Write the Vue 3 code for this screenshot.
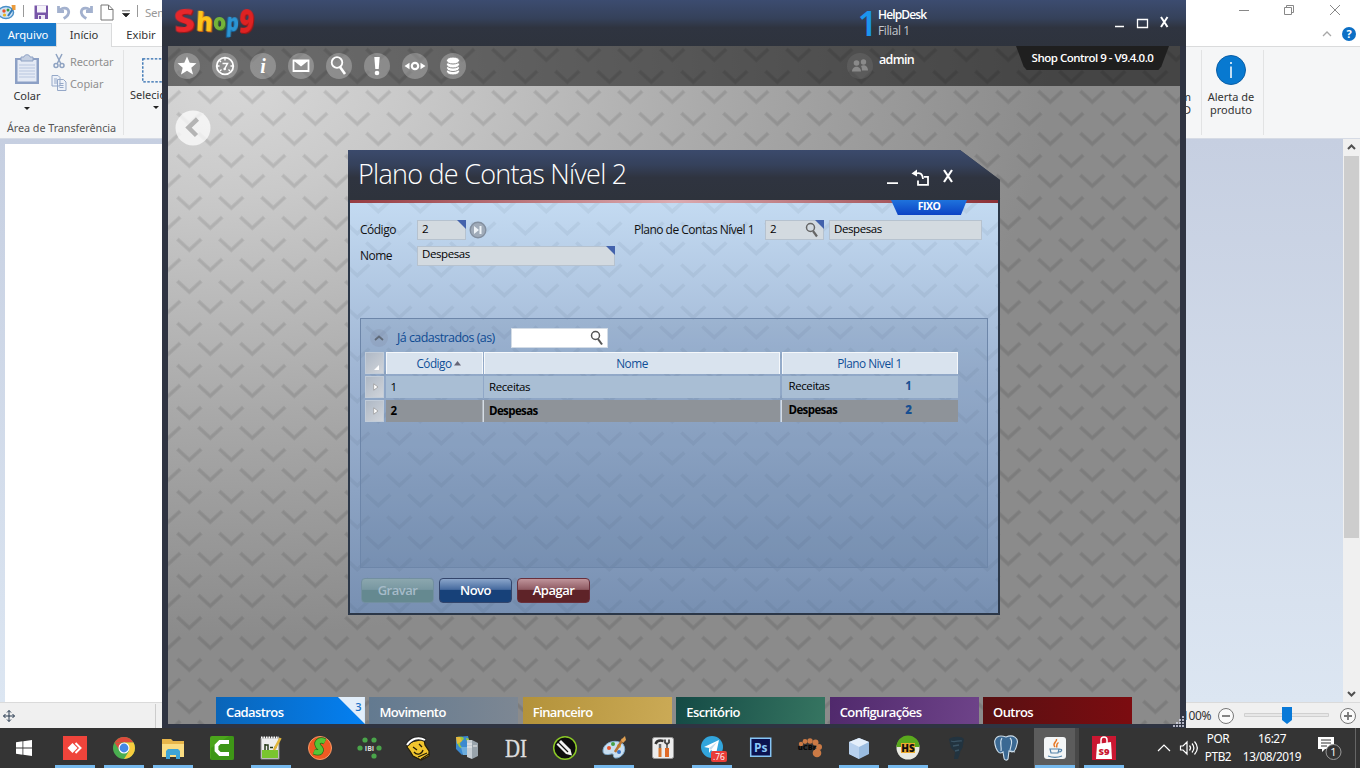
<script setup>
const tools = ['star', 'gauge', 'info', 'mail', 'search', 'alert', 'eye', 'data']
const modules = [
  { name: 'Cadastros', cls: 'blue', badge: 3 },
  { name: 'Movimento', cls: 'slate' },
  { name: 'Financeiro', cls: 'gold' },
  { name: 'Escritório', cls: 'green' },
  { name: 'Configurações', cls: 'purple' },
  { name: 'Outros', cls: 'red' },
]
const rows = [
  { code: 1, name: 'Receitas', parent: 'Receitas', parentCode: 1 },
  { code: 2, name: 'Despesas', parent: 'Despesas', parentCode: 2, selected: true },
]
const tasks = [
  { id: 'anydesk', open: true }, { id: 'chrome', open: true }, { id: 'folder', open: true },
  { id: 'camtasia' }, { id: 'notepad', open: true }, { id: 'sicon' }, { id: 'ib' }, { id: 'smile' },
  { id: 'globe' }, { id: 'di' }, { id: 'pen' }, { id: 'paint', open: true }, { id: 'toolsapp' },
  { id: 'telegram', open: true }, { id: 'ps' }, { id: 'ucbr' }, { id: 'cube', open: true },
  { id: 'hs', open: true }, { id: 'bust' }, { id: 'postgres' }, { id: 'java', open: true, active: true },
  { id: 's9', open: true },
]
</script>

<template>
  <div class="screen">
    <section class="paint">
      <div class="p-title">
        <div class="quick">
          <svg width="16" height="16" viewBox="0 0 16 16" class="q1"><ellipse cx="6" cy="8.500" rx="7.500" ry="6" fill="#cfe3f5" stroke="#4a90c8" stroke-width="1.500"/><circle cx="4" cy="7" r="1.700" fill="#e8542c"/><circle cx="8" cy="6" r="1.500" fill="#3a9c3c"/><circle cx="4.500" cy="11" r="1.600" fill="#e6b422"/><path d="M8 12 13.500 4" stroke="#3079b8" stroke-width="2"/><path d="M11.500 1h4v5h-3z" fill="#eb9b3c"/></svg>
          <i class="bar b1"></i>
          <svg width="15" height="15" viewBox="0 0 15 15" class="q2"><path d="M.5.500h13.500V14H.5z" fill="#7856a8"/><path d="M3 .5h9v7H3z" fill="#f5f3fa"/><path d="M4 10h7v4H4z" fill="#ece8f4"/><path d="M5 11h2v3H5z" fill="#7856a8"/></svg>
          <svg width="14" height="15" viewBox="0 0 14 15" class="q3"><path d="M1.500 1v5.500H7M2 6c3-4 9-4 9.700.5.5 3-2 5.200-5 7" fill="none" stroke="#a3b1ce" stroke-width="2.800"/></svg>
          <svg width="14" height="15" viewBox="0 0 14 15" class="q4"><path d="M12.500 1v5.500H7M12 6C9 2 3 2 2.300 6.500c-.5 3 2 5.200 5 7" fill="none" stroke="#a3b1ce" stroke-width="2.800"/></svg>
          <svg width="14" height="17" viewBox="0 0 14 17" class="q5"><path d="M1 1h7.500L13 5.500V16H1z" fill="#fff" stroke="#777"/><path d="M8.500 1v4.500H13" fill="none" stroke="#777"/></svg>
          <svg width="8" height="8" viewBox="0 0 8 8" class="q6"><path d="M0 .8h8M.5 3.500h7L4 7z" fill="#222" stroke="#222" stroke-width=".7"/></svg>
          <i class="bar b2"></i><span class="doc">Sem</span>
        </div>
        <svg width="105" height="20" viewBox="0 0 105 20" class="wbtn" fill="none" stroke="#888"><path d="M4 10.500h10M49.500 7.500h7v7h-7zM51.500 7.500v-2h7v7h-2"/><path d="m95 5 10 10M105 5 95 15"/></svg>
      </div>
      <div class="p-tabs">
        <span class="t-file">Arquivo</span><span class="t-home">Início</span><span class="t-view">Exibir</span>
        <svg width="38" height="18" viewBox="0 0 38 18" class="help"><path d="m5 11 4-4 4 4" fill="none" stroke="#a8a8a8" stroke-width="1.300"/><circle cx="31" cy="9" r="7" fill="#0c6fc5"/><text x="31" y="13" text-anchor="middle" class="qm">?</text></svg>
      </div>
      <div class="ribbon">
        <div class="clip">
          <div class="clip-row">
            <div class="paste">
              <svg width="26" height="31" viewBox="0 0 26 31"><path d="M1 4h24v26H1z" fill="#8ca0c5"/><path d="M3.500 6h19v21.500h-19z" fill="#e4eaf5"/><path d="M7 3h3c0-3 6-3 6 0h3v4H7z" fill="#c4cfe2" stroke="#8fa2c4"/><path d="M5 11h16M5 14h16M5 17h16M5 20h16M5 23h16" stroke="#b8c6df"/></svg>
              <span>Colar</span><i class="arrow"></i>
            </div>
            <div class="cutcopy">
              <div><svg width="16" height="16" viewBox="0 0 16 16" fill="none" stroke="#8fa3c2" stroke-width="1.500"><path d="m5 1 5 10M11 1 6 11"/><circle cx="5" cy="12.500" r="2"/><circle cx="11" cy="12.500" r="2"/></svg>Recortar</div>
              <div><svg width="16" height="16" viewBox="0 0 16 16" fill="#eef2f9" stroke="#95a8c8"><path d="M1 .5h6l2 2V11H1zM6.500 4.500h6l2.500 2.500v8.500H6.500z"/><path d="M3 4h3M3 6h3M3 8h3M8.500 8.500h4M8.500 10.500h4M8.500 12.500h4"/></svg>Copiar</div>
            </div>
          </div>
          <span class="grp">Área de Transferência</span>
        </div>
        <div class="selectg"><svg width="40" height="25" viewBox="0 0 40 25"><path d="M.8.800h38v23H.8z" fill="none" stroke="#2868ad" stroke-width="1.300" stroke-dasharray="2.500 1.500"/></svg><span>Selecio</span><i class="arrow"></i></div>
        <div class="cut3d"><span>m</span><span>D</span></div>
        <div class="alertg">
          <svg width="30" height="30" viewBox="0 0 30 30"><circle cx="15" cy="15" r="14.500" fill="#0879d0" stroke="#0a5ea6"/><path d="M15 11.500V23M15 7v2" stroke="#fff" stroke-width="1.500"/></svg>
          <span>Alerta de<br>produto</span>
        </div>
      </div>
      <div class="p-work">
        <div class="canvas"></div>
        <div class="scroll"><svg width="17" height="17" viewBox="0 0 17 17"><path d="m5 10 3.500-3.500L12 10" fill="none" stroke="#505050" stroke-width="2"/></svg><div class="thumb"></div><svg width="17" height="17" viewBox="0 0 17 17"><path d="M5 7l3.500 3.500L12 7" fill="none" stroke="#505050" stroke-width="2"/></svg></div>
      </div>
      <div class="p-status">
        <svg width="12" height="12" viewBox="0 0 12 12"><path d="M6 .5v11M.5 6h11M4 2.500l2-2 2 2M4 9.500l2 2 2-2M2.500 4l-2 2 2 2M9.500 4l2 2-2 2" fill="none" stroke="#26384e" stroke-width="1"/></svg>
        <i class="sep"></i>
        <span class="pct">100%</span>
        <svg width="140" height="18" viewBox="0 0 140 18" fill="none" stroke="#777"><circle cx="9" cy="9" r="7.500" fill="#fafafa"/><path d="M5 9h8" stroke-width="1.800"/><path d="M27.500 6.500h84v3h-84z" stroke="#d0d0d0" fill="#e7e7e7"/><path d="M65 0h10v13l-5 4-5-4z" fill="#0879d8" stroke="none"/><circle cx="131" cy="9" r="7.500" fill="#fafafa"/><path d="M127 9h8M131 5v8" stroke-width="1.800"/></svg>
      </div>
    </section>

    <section class="shop">
      <header class="s-head">
        <svg class="logo" width="90" height="38" viewBox="0 0 90 38">
          <g class="lg">
            <text x="2" y="28" font-size="32" textLength="21" lengthAdjust="spacingAndGlyphs" fill="#e6272b" class="c1" transform="rotate(-4 12 20)">S</text>
            <text x="24" y="27" font-size="27" textLength="17" lengthAdjust="spacingAndGlyphs" fill="#fbc51b" class="c2" transform="rotate(3 32 18)">h</text>
            <text x="41" y="25.500" font-size="22" textLength="13" lengthAdjust="spacingAndGlyphs" fill="#74b33a" class="c3">o</text>
            <text x="54.500" y="26.500" font-size="24" textLength="12.500" lengthAdjust="spacingAndGlyphs" fill="#2b95d3" class="c4" transform="rotate(4 60 20)">p</text>
            <text x="67" y="29" font-size="34" textLength="15" lengthAdjust="spacingAndGlyphs" fill="#de2222" class="c1" transform="rotate(5 74 18)">9</text>
          </g>
        </svg>
        <div class="branch"><b class="one">1</b><div><strong>HelpDesk</strong><span>Filial 1</span></div></div>
        <svg class="ctl" width="60" height="30" viewBox="0 0 60 30" fill="none" stroke="#fff"><path d="M4 20.500h9" stroke-width="1.500"/><path d="M26.500 13.500h10v8h-10z" stroke-width="1.300"/><path d="m50 11 6.500 10M56.500 11 50 21" stroke-width="2"/></svg>
      </header>
      <div class="work">
        <svg class="pattern" width="1012" height="678">
          <defs><pattern id="chev" width="42" height="42" patternUnits="userSpaceOnUse" patternTransform="translate(0 40)"><path d="M-11.700 5 .3 16l12-11M30.300 5l12 11 12-11M9.300 27l12 11 12-11" fill="none" stroke="#000" stroke-opacity=".55" stroke-width="4"/><path d="M-11.200 5.500.3 16l11.500-10.500M30.800 5.500 42.300 16l11.500-10.500M9.800 27.500 21.300 38l11.500-10.500" fill="none" stroke="#000" stroke-opacity=".7" stroke-width="2.200"/></pattern></defs>
          <rect width="1012" height="678" fill="url(#chev)"/>
        </svg>
        <nav class="tools">
          <span v-for="t in tools" :key="t" class="tool">
            <svg width="26" height="26" viewBox="0 0 26 26" fill="none" stroke="#fff" stroke-width="1.800">
              <path v-if="t === 'star'" d="m13 3.500 2.700 6.300 6.800.5-5.200 4.400 1.700 6.800-6-3.700-6 3.700 1.700-6.800-5.200-4.400 6.800-.5z" fill="#fff" stroke="none"/>
              <g v-else-if="t === 'gauge'"><circle cx="13" cy="13" r="8.300"/><path d="M13 5v2.500M5 13h2.500M18.500 13H21M7.500 7.500 9 9M8 18l1.500-1.500M18 18l-1.500-1.500" stroke-width="1.300"/><path d="M10.500 10.500h5l-2.700 5" stroke-width="1.500"/><circle cx="12.700" cy="16" r="1.300" fill="#fff" stroke="none"/></g>
              <text v-else-if="t === 'info'" x="13" y="20" text-anchor="middle" class="ital">i</text>
              <g v-else-if="t === 'mail'"><path d="M5.500 7.500h15v10.500h-15z"/><path d="M5.500 7.500h15L13 13.500z" fill="#fff" stroke="none"/></g>
              <g v-else-if="t === 'search'"><circle cx="11" cy="9.500" r="5.300"/><path d="m14 14 5 7" stroke-width="2.600"/></g>
              <g v-else-if="t === 'alert'" fill="#fff" stroke="none"><path d="M10.300 4h5.400l-1 12h-3.400z"/><circle cx="13" cy="20" r="2.300"/></g>
              <g v-else-if="t === 'eye'"><circle cx="13" cy="13" r="3.200" stroke-width="2.200"/><path d="M2.500 13 7.500 9.800v6.400zM23.500 13 18.500 9.800v6.400z" fill="#fff" stroke="none"/></g>
              <g v-else fill="#fff" stroke="#888" stroke-width="1"><ellipse cx="13" cy="18.500" rx="6.500" ry="3.500"/><ellipse cx="13" cy="15" rx="6.500" ry="3.500"/><ellipse cx="13" cy="11.500" rx="6.500" ry="3.500"/><ellipse cx="13" cy="7.500" rx="6.500" ry="3.500"/></g>
            </svg>
          </span>
          <div class="user"><svg width="26" height="26" viewBox="0 0 26 26"><circle cx="13" cy="13" r="13" fill="#fff" opacity=".08"/><g fill="#8a8a8a"><circle cx="9.500" cy="10" r="2.800"/><path d="M5 18.500c0-6.500 9-6.500 9 0z"/><circle cx="16.500" cy="9" r="2.700"/><path d="M14 13c3-1.800 7 0 7 4.500h-6c0-2-.3-3-1-4.500z"/></g></svg><span>admin</span></div>
          <div class="version">Shop Control 9 - V9.4.0.0</div>
        </nav>
        <svg class="back" width="36" height="36" viewBox="0 0 36 36"><circle cx="18" cy="18" r="17.500" fill="#fff" opacity=".72"/><path d="m22.500 9-9 8.500 8 8" fill="none" stroke="#b4b4b4" stroke-width="4.500"/></svg>

        <div class="dialog">
          <div class="d-head"><h1>Plano de Contas Nível 2</h1>
            <svg width="70" height="24" viewBox="0 0 70 24" fill="none" stroke="#fff" stroke-width="1.800"><path d="M1 19.200h11"/><path d="M32 16.500v4.300h10v-8h-4M30 9.500c4-1 6.500 0 7 5.500"/><path d="m25.500 9.500 5.500-4v7z" fill="#fff" stroke="none"/><path d="m58 6 8 12M66 6l-8 12" stroke-width="2.200"/></svg>
          </div>
          <div class="d-body">
            <svg class="d-pattern" width="648" height="413"><defs><pattern id="chev2" width="42" height="42" patternUnits="userSpaceOnUse" patternTransform="translate(-14 -5)"><path d="M-11.700 5.500.3 16.500l12-11M30.300 5.500l12 11 12-11M9.300 27.500l12 11 12-11" fill="none" stroke="#234" stroke-width="3.600"/></pattern></defs><rect width="648" height="413" fill="url(#chev2)"/></svg>
            <div class="redline"></div>
            <div class="fixo">FIXO</div>
            <div class="form">
              <div class="line">
                <label class="l1">Código</label><div class="inp w-code req">2</div>
                <svg class="next" width="18" height="18" viewBox="0 0 18 18"><circle cx="9" cy="9" r="7.800" fill="#a0abb9" stroke="#838f9f" stroke-width="1.400"/><path d="m5 5 5 4-5 4zM10.500 5h2v8h-2z" fill="#edf2f7"/></svg>
                <label class="l2">Plano de Contas Nível 1</label>
                <div class="inp w-plan req">2<svg width="14" height="16" viewBox="0 0 14 16" class="mag"><circle cx="5.500" cy="5.500" r="4" fill="none" stroke="#666" stroke-width="1.500"/><path d="m8 9 4 5.500" stroke="#666" stroke-width="2.200"/></svg></div>
                <div class="inp w-desc">Despesas</div>
              </div>
              <div class="line"><label class="l1">Nome</label><div class="inp w-name req high">Despesas</div></div>
            </div>
            <div class="panel">
              <div class="p-top"><span class="fold"><svg width="10" height="6" viewBox="0 0 10 6"><path d="m1 5 4-3.500L9 5" fill="none" stroke="#606a78" stroke-width="1.800"/></svg></span><span class="ja">Já cadastrados (as)</span>
                <div class="find"><svg width="14" height="16" viewBox="0 0 14 16"><circle cx="5.500" cy="5.500" r="4" fill="none" stroke="#555" stroke-width="1.500"/><path d="m8 9 4 5.500" stroke="#555" stroke-width="2.100"/></svg></div></div>
              <div class="table">
                <div class="tr th"><i class="handle"><svg width="5" height="5" viewBox="0 0 5 5"><path d="M5 0v5H0z" fill="#fff"/></svg></i><span class="sorted">Código<svg width="7" height="5" viewBox="0 0 7 5"><path d="M3.500 0 7 4.500H0z" fill="#667"/></svg></span><span>Nome</span><span>Plano Nivel 1</span></div>
                <div v-for="r in rows" :key="r.code" class="tr td" :class="{ sel: r.selected }">
                  <i class="handle"><svg width="6" height="8" viewBox="0 0 6 8"><path d="M.7.800 5 4 .7 7.200z" fill="#fff" stroke="#999" stroke-width=".8"/></svg></i><span>{{ r.code }}</span><span>{{ r.name }}</span><span class="par">{{ r.parent }}<b>{{ r.parentCode }}</b></span>
                </div>
              </div>
            </div>
            <div class="btns"><button class="save">Gravar</button><button class="new">Novo</button><button class="del">Apagar</button></div>
          </div>
        </div>

        <div class="modules"><div v-for="m in modules" :key="m.name" class="mod" :class="m.cls">{{ m.name }}<em v-if="m.badge"><b>{{ m.badge }}</b></em></div></div>
      </div>
      <svg class="grip" width="12" height="12" viewBox="0 0 12 12"><path d="M9 1h2M6 4h2M9 4h2M3 7h2M6 7h2M9 7h2M0 10h2M3 10h2M6 10h2M9 10h2" stroke="#dde" stroke-width="1.700"/></svg>
    </section>

    <footer class="taskbar">
      <div class="start"><svg width="16" height="16" viewBox="0 0 16 16" fill="#fff"><path d="M0 2.200 6.500 1.300v6.300H0zM7.300 1.200 16 0v7.600H7.300zM0 8.400h6.500v6.300L0 13.800zM7.300 8.400H16V16l-8.700-1.200z"/></svg></div>
      <div v-for="t in tasks" :key="t.id" class="task" :class="{ open: t.open, active: t.active }">
        <svg width="26" height="26" viewBox="0 0 26 26">
          <g v-if="t.id === 'anydesk'"><path d="M1 1h24v24H1z" fill="#ef443b"/><path d="m5.500 13 5-5 5 5-5 5z" fill="#fff"/><path d="m13.500 8 5 5-5 5" fill="none" stroke="#fff" stroke-width="2"/></g>
          <g v-else-if="t.id === 'chrome'"><circle cx="13" cy="13" r="11" fill="#4aae50"/><path d="M3.500 7.500a11 11 0 0 1 19 0H13z" fill="#de4a3c"/><path d="M3.500 7.500 9 16l4-8z" fill="#de4a3c"/><path d="M22.500 7.500A11 11 0 0 1 13 24l5-8-5-8.500z" fill="#f8cc3e"/><circle cx="13" cy="13" r="5.500" fill="#fff"/><circle cx="13" cy="13" r="4.400" fill="#4688e6"/></g>
          <g v-else-if="t.id === 'folder'"><path d="M2 4h9l2 2h11v15H2z" fill="#e8b64a"/><path d="M2 9h22v13H2z" fill="#fbdd82"/><path d="M6 24v-8l2-2h10l2 2v8h-4v-4h-6v4z" fill="#3da4d6"/></g>
          <g v-else-if="t.id === 'camtasia'"><rect x="1" y="1" width="24" height="24" rx="2" fill="#4ba51b"/><path d="M2 13 20 1h5v24H2z" fill="#2e8411" opacity=".45"/><path d="M20 7h-9l-3.500 3.500v5L11 19h9" fill="none" stroke="#fff" stroke-width="3.800"/></g>
          <g v-else-if="t.id === 'notepad'"><path d="M3 3h18v21H3z" fill="#eee" stroke="#888"/><path d="M4 15h16v8H4z" fill="#79c52e"/><path d="M3 2.500h18" stroke="#fff" stroke-width="2" stroke-dasharray="1.500 1"/><path d="M7 15V9M7 10h3v5M12 12.500h3M16 12.500h2.500" stroke="#263a18" fill="none" stroke-width="1.500"/><path d="m16 15 6.500-12" stroke="#e1b63b" stroke-width="2.600"/></g>
          <g v-else-if="t.id === 'sicon'"><circle cx="13" cy="13" r="11.500" fill="#ee5a22" stroke="#f79a67"/><path d="M18 6.500c-6-3-10 1.500-6 5.500 4 3.500 1 7-5 4.500" fill="none" stroke="#1d6b14" stroke-width="6.200"/><path d="M18 6.500c-6-3-10 1.500-6 5.500 4 3.500 1 7-5 4.500" fill="none" stroke="#56c436" stroke-width="4.800"/></g>
          <g v-else-if="t.id === 'ib'"><g fill="#4aa54a"><circle cx="9" cy="5" r="2.600"/><circle cx="18" cy="5" r="2.600"/><circle cx="4" cy="13" r="2.600"/><circle cx="23" cy="13" r="2.600"/><circle cx="18" cy="21" r="2.600"/></g><text x="13.500" y="15.500" text-anchor="middle" font-size="7" font-weight="700" fill="#ddd">IBI</text></g>
          <g v-else-if="t.id === 'smile'"><path d="M2 12c1-3 5-6 9-6l8-2 1 6 4 6v5l-8 4-8-4-3-5z" fill="#f1c52e" stroke="#221c08" stroke-width="1.200"/><path d="M2 10C6 4 13 1 20 5" stroke="#222" stroke-width="4" fill="none"/><path d="M2 10C6 4 13 1 20 5" stroke="#fff" stroke-width="2" fill="none"/><path d="m8 12 4 3M14 9l3 3M9 17c3 4 8 2 9-2M13 22l9-4M16 24l8-5" stroke="#221c08" stroke-width="1.300" fill="none"/></g>
          <g v-else-if="t.id === 'globe'"><path d="M2 2 14 1l3 12-9 7-6-6z" fill="#3b89d0"/><path d="M3 2c6-1 9 1 5 4s-1 6 2 7c-5 2-8-6-7-11zM12 3c4 0 4 3 1 4z" fill="#9bc83e"/><path d="M2 2h4l2 4-5 3z" fill="#e7b93a"/><path d="M7 12h8v8H9z" fill="#6cacdc"/><path d="M13 5h5v19l-5-2z" fill="#c5cdd3"/><path d="m18 5 6 3v13l-6 3z" fill="#98a3ab"/><path d="M13 9h5M13 12h5M19 11h4" stroke="#eee"/></g>
          <text v-else-if="t.id === 'di'" x="2" y="22" textLength="22" lengthAdjust="spacingAndGlyphs" class="di">DI</text>
          <g v-else-if="t.id === 'pen'"><circle cx="13" cy="13" r="11.300" fill="#0d0d0d" stroke="#8ac726" stroke-width="1.500"/><path d="m9 5 9.500 9.500 1.500 6-6-1.500L4.500 9.500z" fill="#f2f2f2"/><path d="m6 7 10 10" stroke="#111" stroke-width="1.200"/></g>
          <g v-else-if="t.id === 'paint'"><path d="M2 16C2 8 14 3 22 9c5 7-2 15-8 14-3-1 0-5-4-4-4 1-8 1-8-3z" fill="#c9def0" stroke="#7facce"/><circle cx="8" cy="13" r="2" fill="#e8542c"/><circle cx="12" cy="9" r="2" fill="#46a146"/><circle cx="18" cy="11" r="2" fill="#e9b82e"/><circle cx="18" cy="17" r="2" fill="#3c76c7"/><path d="m14 17 8-13" stroke="#b87333" stroke-width="2.500"/><path d="m20 5 4-4 1 4-3 3z" fill="#dfa052"/></g>
          <g v-else-if="t.id === 'toolsapp'"><rect x="2.500" y="2.500" width="21" height="21" rx="2" fill="#ececec" stroke="#999"/><path d="M10 9v4" stroke="#6d6d6d" stroke-width="2.500"/><path d="M10 13v9" stroke="#d9772f" stroke-width="3"/><path d="M5.500 9c1-3 4-4 8-3" stroke="#333" stroke-width="2.500" fill="none"/><path d="M17 8v5" stroke="#777" stroke-width="2"/><path d="M17 13v9" stroke="#e06a27" stroke-width="4"/><path d="M15 4.500v3l2 1.500 2-1.500v-3" stroke="#444" stroke-width="1.800" fill="none"/></g>
          <g v-else-if="t.id === 'telegram'"><circle cx="13" cy="12" r="11" fill="#32a5dc"/><path d="m5 12 15-7-3 14-5-4-2 3v-5z" fill="#fff"/><path d="m10 13 8-6-6 8" fill="#c5dcec"/></g>
          <g v-else-if="t.id === 'ps'"><path d="M2.700 3.200h20v18h-20z" fill="#0b1250" stroke="#86c5f6" stroke-width="1.500"/><text x="12.700" y="17" text-anchor="middle" font-size="12" font-weight="700" fill="#8bc8f8">Ps</text></g>
          <g v-else-if="t.id === 'ucbr'"><g fill="#cb7a45"><circle cx="4" cy="9" r="2.200"/><circle cx="8" cy="6.500" r="2.400"/><circle cx="13" cy="6" r="2.700"/><circle cx="18.500" cy="7.500" r="3"/><circle cx="22" cy="12" r="3"/><circle cx="20" cy="18" r="4.300"/></g><text x="10" y="15" text-anchor="middle" font-size="7.500" font-weight="900" fill="#080808">uCBr</text></g>
          <g v-else-if="t.id === 'cube'"><path d="m13 3 10 4v12l-10 5-10-5V7z" fill="#9abce0"/><path d="m3 7 10 5v12L3 19z" fill="#b8d1ee"/><path d="m13 3 10 4-10 5L3 7z" fill="#e4effb"/></g>
          <g v-else-if="t.id === 'hs'"><circle cx="13" cy="13" r="11.500" fill="#e9e9e1"/><path d="M1.500 12a11.500 11.500 0 0 1 23 0z" fill="#5aa91d"/><path d="M6 8h14v10H6z" fill="#eda92d"/><text x="13" y="17" text-anchor="middle" font-size="10" font-weight="800" fill="#111">HS</text></g>
          <g v-else-if="t.id === 'bust'"><path d="M5 4c4-3 13-3 15 0l-1 6c0 4-3 5-3 8l-2 6h-4l1-7-4-4z" fill="#22333f"/><path d="M7 6c4 2 8-1 11 0M9 11l6-1M11 16l4-1" stroke="#3b5464" stroke-width="1.300" fill="none"/></g>
          <g v-else-if="t.id === 'postgres'"><path d="M2 5C4 0 10 1 13 2c7-3 13 1 11 7-1 5-3 8-5 8l-3-1-1 8c-1 2-4 1-4-1l-1-6c-3 2-5 1-7-4-1-3-2-6-1-8z" fill="#3b6993" stroke="#cfe0ed" stroke-width="1.100"/><path d="M9 3c-3 4 0 8-1 13M17 3c4 4 0 8 0 13M18 16l4 1" stroke="#cfe0ed" fill="none" stroke-width="1.100"/></g>
          <g v-else-if="t.id === 'java'"><rect x="2" y="2" width="22" height="22" rx="3" fill="#f3f5f6"/><path d="M14.500 4c1 3-5 4-1.500 8M16.500 7.500c-3 2-1 3-2 5" fill="none" stroke="#e67522" stroke-width="1.500"/><path d="M8 14h9l-1 4H9zM17.500 14c3.500 0 2.500 3-1 3M6 21c4 1.500 10 1.500 14 0" fill="none" stroke="#5484aa" stroke-width="1.200"/></g>
          <g v-else><path d="M1 1h24v24H1z" fill="#ca1731"/><path d="m6 9 14-2 1 17H5z" fill="#fff"/><path d="M10 9V5c0-4 6-4 6 0v3" fill="none" stroke="#fff" stroke-width="1.500"/><text x="13" y="20" text-anchor="middle" font-size="9.500" font-weight="800" fill="#ca1731">S9</text></g>
        </svg>
        <span v-if="t.id === 'telegram'" class="tg">.76</span>
      </div>
      <div class="tray">
        <svg width="48" height="20" viewBox="0 0 48 20" fill="none" stroke="#fff" stroke-width="1.200"><path d="m5 13 6-6 6 6M27.500 8h2.500l4-4v12l-4-4h-2.500zM36.500 7.500c1.300 1.500 1.300 3.500 0 5M39 5.500c2.500 3 2.500 6 0 9M41.500 3.500c3.500 4 3.500 9 0 13"/></svg>
        <div class="two lang"><span>POR</span><span>PTB2</span></div>
        <div class="two clock"><span>16:27</span><span>13/08/2019</span></div>
        <svg width="26" height="26" viewBox="0 0 26 26" class="notif"><path d="M1 2h16v12H8l-3 3v-3H1z" fill="#fff"/><path d="M4 5h10M4 8h10M4 11h6" stroke="#343434"/><circle cx="16.500" cy="17" r="7.500" fill="#343434" stroke="#999"/><text x="16.500" y="21" text-anchor="middle" font-size="11" fill="#fff">1</text></svg>
        <i class="show"></i>
      </div>
    </footer>
  </div>
</template>

<style>
body { margin: 0; overflow: hidden; }
</style>
<style scoped>
* { box-sizing: border-box; }
svg { display: block; flex: none; }
.screen { position: relative; width: 1360px; height: 768px; overflow: hidden; font-family: "Open Sans", "Noto Sans", sans-serif; display: flex; flex-direction: column; white-space: nowrap; }
i { font-style: normal; }
.paint { height: 728px; display: flex; flex-direction: column; font-family: "Noto Sans", sans-serif; font-size: 11px; color: #333; }
.p-title { height: 23px; background: #fff; display: flex; justify-content: space-between; }
.quick { display: flex; align-items: center; height: 24px; }
.bar { width: 1px; height: 12px; background: #999; margin-bottom: 2px; }
.b1 { margin: 0 10px 2px 7px; }
.q2 { margin-right: 8px; }.q3 { margin-right: 8px; }.q4 { margin-right: 7px; }.q5 { margin-right: 8px; }.q6 { margin-right: 7px; margin-top: 3px; }
.doc { color: #999; margin-left: 7px; font-size: 11.500px; letter-spacing: -.3px; width: 17px; overflow: hidden; }
.wbtn { margin-right: 20px; overflow: hidden; }
.p-tabs { height: 24px; background: #fff; border-bottom: 1px solid #dadbdc; display: flex; font-size: 11.200px; line-height: 23px; text-align: center; }
.t-file { width: 56px; height: 23px; background: #1979ca; color: #fff; }
.t-home { width: 56px; height: 24px; background: #f5f6f7; border: 1px solid #dadbdc; border-bottom: 0; line-height: 21px; }
.t-view { width: 58px; }
.help { margin: 2px 4px 0 auto; }
.qm { font: 700 11px "Open Sans"; fill: #fff; }
.ribbon { height: 92px; background: #f5f6f7; border-bottom: 1px solid #d6dbe5; display: flex; }
.clip { width: 124px; border-right: 1px solid #e2e3e4; margin: 3px 0; display: flex; flex-direction: column; justify-content: space-between; }
.clip-row { display: flex; }
.paste { width: 50px; margin-left: 2px; display: flex; flex-direction: column; align-items: center; padding-top: 4px; font-size: 11px; }
.paste span { margin-top: 3px; line-height: 16px; }
.arrow { border: 3px solid transparent; border-top-color: #222; margin-top: 3px; }
.cutcopy { color: #8f8f8f; font-size: 11px; margin-left: -1px; }
.cutcopy div { display: flex; align-items: center; gap: 3px; height: 22px; letter-spacing: -.1px; }
.grp { padding-left: 7px; color: #555; font-size: 10.800px; line-height: 13px; letter-spacing: -.05px; }
.clip { padding-bottom: 1px; }
.selectg { margin-left: 6px; padding-top: 11px; width: 52px; display: flex; flex-direction: column; align-items: flex-start; font-size: 11px; }
.selectg svg { margin-left: 12px; }.selectg span { margin: 4px 0 0 0; line-height: 16px; width: 32px; overflow: hidden; }.selectg .arrow { margin-left: 23px; }
.cut3d { margin: 3px 0 3px auto; width: 26px; padding: 40px 10px 0 0; border-right: 1px solid #e2e3e4; line-height: 13px; display: flex; flex-direction: column; align-items: flex-end; }
.alertg { width: 62px; margin: 3px 96px 3px 0; border-right: 1px solid #e2e3e4; padding: 5px 3px 0 0; display: flex; flex-direction: column; align-items: center; text-align: center; line-height: 13px; font-size: 11px; }
.alertg span { margin-top: 5px; }
.p-work { flex: 1; background: linear-gradient(#c6cfe1, #dce6f2); display: flex; justify-content: space-between; }
.canvas { margin: 5px 0 0 5px; width: 400px; background: #fff; }
.scroll { width: 17px; background: #f0f0f0; display: flex; flex-direction: column; }
.thumb { height: 382px; background: #cdcdcd; margin: 0 1px auto; }
.p-status { height: 26px; background: #f0f0f0; border-top: 1px solid #dadada; display: flex; align-items: center; padding: 0 3px; }
.sep { height: 24px; width: 1px; background: #ccc; margin-left: 140px; }
.pct { margin-left: auto; margin-right: 6px; font-size: 12px; letter-spacing: -.4px; }
.p-status svg:last-child { width: 140px; }

.shop { position: absolute; left: 162px; top: 0; width: 1024px; height: 728px; background: #2f3442; color: #fff; }
.s-head { height: 46px; background: linear-gradient(#3c4c70, #35415a 40%, #2f3440 60%, #2e333d); display: flex; padding: 0 12px; }
.logo { margin-top: 4px; margin-left: -2px; overflow: visible; }
.lg { font-family: "Open Sans", sans-serif; font-weight: 800; }
.c1 { filter: drop-shadow(1px 1.500px 0 #9c1515); }
.c2 { filter: drop-shadow(1px 1.500px 0 #e0690c); }
.c3 { filter: drop-shadow(1px 1.500px 0 #3c7426); }
.c4 { filter: drop-shadow(-1px 1.500px 0 #125f98); }
.branch { display: flex; margin-left: 595px; width: 100px; }
.one { font-family: "Noto Sans"; font-size: 34px; font-weight: 600; line-height: 46px; color: #1b95ee; width: 21px; text-align: center; }
.branch div { display: flex; flex-direction: column; font-size: 12px; line-height: 16px; padding-top: 7px; letter-spacing: -.85px; }
.branch strong { font-weight: 600; }
.branch div span { color: #c5c8ce; letter-spacing: -.4px; }
.ctl { margin: 6px 3px 0 auto; }
.work { position: relative; margin: 0 6px; height: 678px; background: radial-gradient(ellipse 820px 560px at 60px 30px, #d8d8d8, #c9c9c9 22%, #a9a9a9 60%, #8b8b8b 100%); }
.pattern { position: absolute; left: 0; top: 0; opacity: .12; }
.tools { position: relative; height: 40px; background: rgba(0, 0, 0, .5); display: flex; padding-left: 6px; gap: 12px; align-items: center; }
.tool { width: 26px; height: 26px; border-radius: 50%; background: rgba(255, 255, 255, .25); }
.ital { font: italic 700 20px "Liberation Serif"; fill: #fff; stroke: none; }
.user { display: flex; gap: 6px; margin-left: 369px; font-size: 12.500px; font-weight: 600; letter-spacing: -.65px; }
.user span { margin-top: -2px; }
.version { position: absolute; right: 11px; top: 0; width: 153px; height: 24px; background: #1f1f1f; clip-path: polygon(0 0, 100% 0, 95% 85%, 93% 100%, 7% 100%, 5% 85%); text-align: center; line-height: 24px; font-size: 11.500px; font-weight: 600; letter-spacing: -.5px; }
.back { position: absolute; left: 7px; top: 64px; }

.dialog { position: absolute; left: 180px; top: 104px; width: 652px; height: 465px; background: #2b3748; clip-path: polygon(0 0, 612px 0, 100% 30px, 100% 100%, 0 100%); color: #111; }
.d-head { height: 50px; background: linear-gradient(#3b4a6c, #35415b 30%, #2f3440 55%, #2e333c); display: flex; justify-content: space-between; padding: 0 44px 0 10px; color: #fff; }
.d-head svg { margin-top: 14px; }
h1 { margin: 0; font-size: 27px; font-weight: 300; line-height: 48px; letter-spacing: -.75px; }
.d-body { position: relative; margin: 0 2px; height: 413px; background: linear-gradient(#c4dbf2, #9fb5d3 42%, #7890b2); font-size: 12px; letter-spacing: -.5px; }
.d-pattern { position: absolute; opacity: .055; }
.redline { position: relative; height: 3px; background: linear-gradient(90deg, #963c42, #dbaab0 50%, #8c3036); }
.fixo { position: absolute; left: 541px; top: 0; width: 76px; height: 15px; background: linear-gradient(#1f73dc, #0b42c5); clip-path: polygon(0 0, 100% 0, 92% 100%, 9% 100%); color: #fff; font-weight: 700; font-size: 10.500px; line-height: 12px; text-align: center; }
.form { position: relative; padding: 17px 0 0 10px; height: 115px; display: flex; flex-direction: column; gap: 6px; }
.line { display: flex; height: 20px; align-items: center; }
.l1, .l2 { padding-bottom: 1px; }
.l1 { width: 57px; }.l2 { margin-left: 147px; width: 131px; }
.inp { position: relative; height: 20px; background: #d3dae0; border: 1px solid #b6c2cf; padding-left: 4px; line-height: 16px; font-size: 11.500px; color: #000; letter-spacing: -.4px; }
.high { line-height: 14px; }
.req::after { content: ""; position: absolute; right: -1px; top: -1px; border-top: 9px solid #4362ac; border-left: 9px solid transparent; }
.w-code { width: 49px; }.w-plan { width: 59px; }.w-desc { width: 153px; margin-left: 5px; }.w-name { width: 198px; }
.next { margin-left: 3px; }
.mag { position: absolute; right: 4px; top: 1px; }
.panel { position: relative; margin-left: 10px; width: 628px; height: 250px; border: 1px solid #6d86a9; background: rgba(60, 90, 130, .13); }
.p-top { display: flex; height: 20px; margin-top: 9px; align-items: center; }
.fold { width: 18px; height: 18px; border-radius: 50%; background: rgba(120, 130, 150, .18); margin-left: 9px; display: grid; place-items: center; }
.ja { margin-left: 9px; width: 114px; color: #0f4b92; font-size: 12.500px; font-weight: 500; letter-spacing: -.55px; padding-bottom: 1px; }
.find { width: 97px; height: 20px; background: #fff; border: 1px solid #d3dce6; display: flex; justify-content: flex-end; padding: 1px 3px; }
.table { margin: 4px 0 0 4px; width: 592px; display: flex; flex-direction: column; gap: 2px; font-size: 11.500px; letter-spacing: -.4px; }
.tr { display: grid; grid-template-columns: 19px 97px 296px 176px; column-gap: 1.500px; height: 22px; line-height: 21px; }
.handle { background: linear-gradient(135deg, #aeb8c5, #d0d4da); border: 1px solid #c2ccd8; display: grid; place-items: center end; padding-right: 4px; }
.th .handle { place-items: end; padding: 0 4px 3px 0; }
.th span { background: #d9e3ee; border: 1px solid #f5f8fb; border-bottom: 0; text-align: center; color: #0f4f97; letter-spacing: -.5px; font-size: 11.800px; font-weight: 500; }
.th .sorted { padding-left: 9px; }
.th span svg { display: inline-block; margin: 0 0 2px 2px; }
.td span { background: #a9bed4; padding-left: 5px; color: #000; }
.td .par { display: flex; line-height: 19px; padding-left: 7px; }
.par b { margin-left: auto; margin-right: 46px; color: #184f91; }
.td.sel { font-weight: 700; letter-spacing: -.6px; }
.td.sel span { background: #8e9399; }
.td.sel span + span { box-shadow: -1.500px 0 #d5dde6; }
.btns { position: relative; display: flex; gap: 5px; margin: 10px 0 0 11px; }
button { width: 73px; height: 25px; border-radius: 4px; border: 1px solid #33456b; font: 600 13px "Open Sans", sans-serif; letter-spacing: -.5px; color: #fff; padding: 0 0 2px; }
.save { background: linear-gradient(#8ba7ae, #7897a1 45%, #658990 50%); color: #a6bbc9; border-color: #728fa0; }
.new { background: linear-gradient(#8aa5ca, #476b9f 45%, #174179 50%); }
.del { background: linear-gradient(#bf949a, #8f5b63 45%, #5e2328 50%); border-color: #692f3b; }
.modules { position: absolute; left: 48px; bottom: 0; width: 916px; display: grid; grid-template-columns: repeat(6, 1fr); gap: 4.500px; }
.mod { position: relative; height: 27px; padding-left: 10px; line-height: 30px; font-size: 13px; font-weight: 600; letter-spacing: -.6px; }
.mod em { position: absolute; right: 0; top: 0; width: 27px; height: 27px; background: #e2eefa; clip-path: polygon(0 0, 100% 0, 100% 100%); font-style: normal; }
.mod em b { position: absolute; right: 4px; top: 2px; line-height: 16px; font-size: 11px; font-weight: 600; color: #1670c8; }
.blue { background: linear-gradient(90deg, #0a65b8, #0480f2); }
.slate { background: linear-gradient(90deg, #637a90, #7d8793); }
.gold { background: linear-gradient(100deg, #b3923a, #cbaa56); }
.green { background: linear-gradient(100deg, #144a45, #367561); }
.purple { background: linear-gradient(100deg, #50296c, #6e4389); }
.red { background: linear-gradient(90deg, #581012, #7c0c10); }
.grip { position: absolute; right: 1px; bottom: 0; }

.taskbar { height: 40px; background: #343434; color: #fff; display: flex; }
.start { width: 50px; display: grid; place-items: center; padding-right: 2px; }
.task { position: relative; width: 49px; height: 40px; display: grid; place-items: center; flex: none; }
.task.open::after { content: ""; position: absolute; left: 5px; right: 4px; bottom: 0; height: 3px; background: #76b9ed; }
.task.active { background: linear-gradient(90deg, transparent 4px, #5c5c5c 4px 45px, #484848 45px); }
.di { font: 26px "Liberation Serif"; fill: #ddd; stroke: #ddd; stroke-width: .4; }
.tg { position: absolute; left: 24px; top: 23px; background: #ea3d38; border-radius: 2px; padding: 0 2px; font-size: 8.500px; line-height: 11px; }
.tray { margin-left: auto; display: flex; align-items: center; height: 40px; }
.two { display: flex; flex-direction: column; align-items: center; font-family: "Noto Sans", sans-serif; font-size: 11.800px; line-height: 18px; letter-spacing: -.45px; margin-top: -2px; }
.lang { width: 34px; }.clock { width: 62px; margin-left: 6px; }
.notif { margin-left: 14px; }
.show { width: 1px; height: 40px; background: #666; margin: 0 4px 0 12px; }
</style>
